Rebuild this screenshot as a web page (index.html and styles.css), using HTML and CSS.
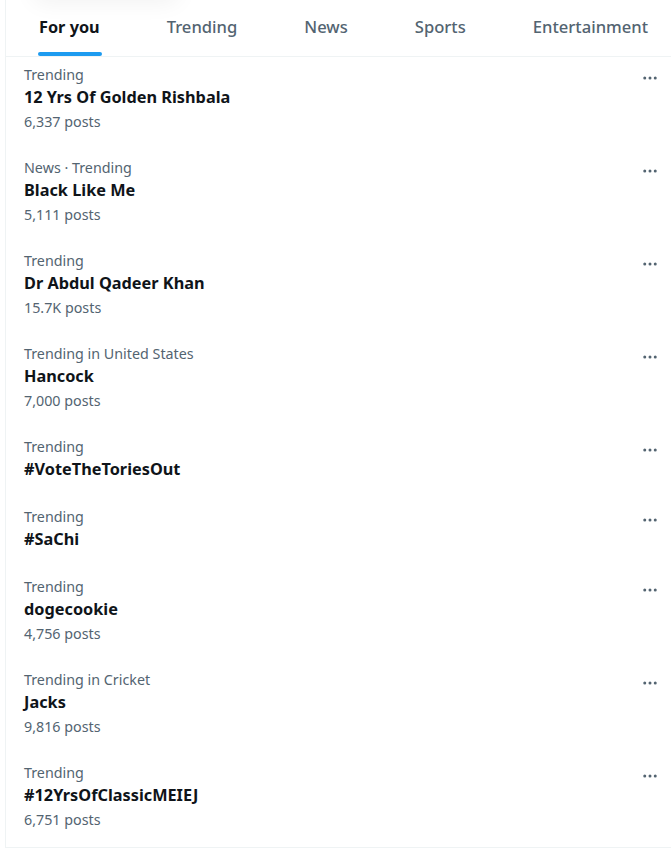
FILE: index.html
```html
<!DOCTYPE html>
<html lang="en">
<head>
  <meta charset="UTF-8">
  <title>Explore</title>
  <meta name="viewport" content="width=device-width, initial-scale=1.0">
  <link rel="stylesheet" href="styles.css">
</head>
<body>

<div class="panel">
  <nav class="tabs">
    <a class="tab active"><span>For you</span></a>
    <a class="tab"><span>Trending</span></a>
    <a class="tab"><span>News</span></a>
    <a class="tab"><span>Sports</span></a>
    <a class="tab"><span>Entertainment</span></a>
  </nav>

  <div class="trend">
    <div class="info">
      <div class="meta">Trending</div>
      <div class="name">12 Yrs Of Golden Rishbala</div>
      <div class="count">6,337 posts</div>
    </div>
    <button class="more"><svg viewBox="0 0 24 24"><circle cx="5" cy="12" r="2"/><circle cx="12" cy="12" r="2"/><circle cx="19" cy="12" r="2"/></svg></button>
  </div>

  <div class="trend">
    <div class="info">
      <div class="meta">News · Trending</div>
      <div class="name">Black Like Me</div>
      <div class="count">5,111 posts</div>
    </div>
    <button class="more"><svg viewBox="0 0 24 24"><circle cx="5" cy="12" r="2"/><circle cx="12" cy="12" r="2"/><circle cx="19" cy="12" r="2"/></svg></button>
  </div>

  <div class="trend">
    <div class="info">
      <div class="meta">Trending</div>
      <div class="name">Dr Abdul Qadeer Khan</div>
      <div class="count">15.7K posts</div>
    </div>
    <button class="more"><svg viewBox="0 0 24 24"><circle cx="5" cy="12" r="2"/><circle cx="12" cy="12" r="2"/><circle cx="19" cy="12" r="2"/></svg></button>
  </div>

  <div class="trend">
    <div class="info">
      <div class="meta">Trending in United States</div>
      <div class="name">Hancock</div>
      <div class="count">7,000 posts</div>
    </div>
    <button class="more"><svg viewBox="0 0 24 24"><circle cx="5" cy="12" r="2"/><circle cx="12" cy="12" r="2"/><circle cx="19" cy="12" r="2"/></svg></button>
  </div>

  <div class="trend">
    <div class="info">
      <div class="meta">Trending</div>
      <div class="name">#VoteTheToriesOut</div>
    </div>
    <button class="more"><svg viewBox="0 0 24 24"><circle cx="5" cy="12" r="2"/><circle cx="12" cy="12" r="2"/><circle cx="19" cy="12" r="2"/></svg></button>
  </div>

  <div class="trend">
    <div class="info">
      <div class="meta">Trending</div>
      <div class="name">#SaChi</div>
    </div>
    <button class="more"><svg viewBox="0 0 24 24"><circle cx="5" cy="12" r="2"/><circle cx="12" cy="12" r="2"/><circle cx="19" cy="12" r="2"/></svg></button>
  </div>

  <div class="trend">
    <div class="info">
      <div class="meta">Trending</div>
      <div class="name">dogecookie</div>
      <div class="count">4,756 posts</div>
    </div>
    <button class="more"><svg viewBox="0 0 24 24"><circle cx="5" cy="12" r="2"/><circle cx="12" cy="12" r="2"/><circle cx="19" cy="12" r="2"/></svg></button>
  </div>

  <div class="trend">
    <div class="info">
      <div class="meta">Trending in Cricket</div>
      <div class="name">Jacks</div>
      <div class="count">9,816 posts</div>
    </div>
    <button class="more"><svg viewBox="0 0 24 24"><circle cx="5" cy="12" r="2"/><circle cx="12" cy="12" r="2"/><circle cx="19" cy="12" r="2"/></svg></button>
  </div>

  <div class="trend">
    <div class="info">
      <div class="meta">Trending</div>
      <div class="name">#12YrsOfClassicMEIEJ</div>
      <div class="count">6,751 posts</div>
    </div>
    <button class="more"><svg viewBox="0 0 24 24"><circle cx="5" cy="12" r="2"/><circle cx="12" cy="12" r="2"/><circle cx="19" cy="12" r="2"/></svg></button>
  </div>
</div>

</body>
</html>
```

FILE: styles.css
```css
* {
  box-sizing: border-box;
  margin: 0;
  padding: 0;
}

body {
  background: #fff;
  color: #0f1419;
  font-family: "Noto Sans", "Open Sans", sans-serif;
  overflow: hidden;
}

.panel {
  position: relative;
  margin-left: 5px;
  border-left: 1px solid #eff3f4;
  border-bottom: 1px solid #eff3f4;
  height: 848px;
}

/* faint shadow of the floating search box above */
.panel::before {
  content: "";
  position: absolute;
  left: 25px;
  top: -30px;
  width: 150px;
  height: 30px;
  border-radius: 20px;
  box-shadow: 0 4px 22px rgba(0, 0, 0, 0.05);
}

.tabs {
  display: flex;
  height: 57px;
  border-bottom: 1px solid #eff3f4;
  white-space: nowrap;
}

.tab {
  padding: 0 33.5px;
  display: flex;
  justify-content: center;
  color: #536471;
  font-size: 16.6px;
  font-weight: 500;
}

.tab:first-child {
  padding-left: 33px;
}

.tab span {
  display: flex;
  align-items: center;
  padding-bottom: 3px;
  position: relative;
}

.tab.active {
  color: #0f1419;
  font-weight: 700;
  font-size: 16.3px;
}

.tab.active span::after {
  content: "";
  position: absolute;
  left: -1px;
  right: -2px;
  bottom: 0;
  height: 4px;
  border-radius: 2px;
  background: #1d9bf0;
}

.trend {
  display: flex;
  justify-content: space-between;
  padding: 8px 9px 18px 18px;
}

.meta,
.count {
  color: #536471;
  font-size: 14.3px;
  line-height: 20px;
}

.name {
  font-size: 16.3px;
  font-weight: 700;
  line-height: 24px;
}

.count {
  line-height: 23px;
  padding-top: 1px;
  margin-bottom: -1px;
}

.more {
  border: none;
  background: none;
  width: 24px;
  height: 24px;
  margin-top: 2px;
  fill: #536471;
}

.more svg {
  width: 18px;
  height: 18px;
}
```
